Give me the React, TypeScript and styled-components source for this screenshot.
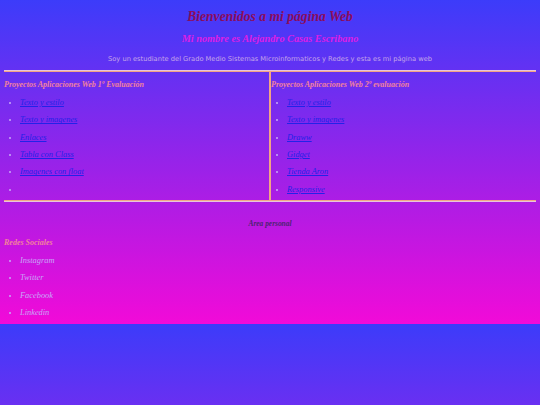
import React from "react";
import styled, { createGlobalStyle } from "styled-components";

const GlobalStyle = createGlobalStyle`
  html {
    margin: 0;
    background: linear-gradient(#3c3cfa, #f20ad8);
  }
  body {
    margin: 4px 4px 3px;
    font-family: "Liberation Serif", "Times New Roman", serif;
  }
`;

const Title = styled.h1`
  margin: 5px 0 0;
  font-size: 13.6px;
  line-height: 16px;
  font-style: italic;
  font-weight: bold;
  color: #8c0c5c;
  text-align: center;
`;

const SubTitle = styled.h2`
  margin: 7px 0 0;
  font-size: 10.3px;
  line-height: 13px;
  font-style: italic;
  font-weight: bold;
  color: #dc1ee6;
  text-align: center;
`;

const Intro = styled.p`
  margin: 10px 0 0;
  font-family: "DejaVu Sans", Verdana, sans-serif;
  font-size: 6.7px;
  line-height: 9px;
  color: #c4a6ea;
  text-align: center;
`;

const Table = styled.table`
  width: calc(100% + 4px);
  margin: 6px -2px 0;
  border: 1px solid #e8c4dc;
  border-collapse: separate;
  border-spacing: 0;
`;

const Cell = styled.td`
  width: 50%;
  vertical-align: top;
  padding: 0;
  border: 1px solid #f2a486;
`;

const SectionHeading = styled.h3<{ $top?: number }>`
  margin: ${(p) => p.$top ?? 8}px 0 0;
  font-size: 8px;
  line-height: 10px;
  font-style: italic;
  font-weight: bold;
  color: #f2829c;
`;

const List = styled.ul<{ $bottom?: number }>`
  margin: 4px 0 ${(p) => p.$bottom ?? 2}px;
  padding-left: 16px;
  list-style: disc;
`;

const Item = styled.li`
  font-size: 8.4px;
  line-height: 17.35px;
  font-style: italic;
  color: #c8a8f8;
`;

const Link = styled.a`
  color: #2222e8;
  text-decoration: underline;
`;

const AreaNote = styled.p`
  margin: 17px 0 0;
  font-size: 7.4px;
  line-height: 9px;
  font-style: italic;
  font-weight: bold;
  color: #4c2470;
  text-align: center;
`;

const first = ["Texto y estilo", "Texto y imagenes", "Enlaces", "Tabla con Class", "Imagenes con float"];
const second = ["Texto y estilo", "Texto y imagenes", "Draww", "Gidget", "Tienda Aron", "Responsive"];
const social = ["Instagram", "Twitter", "Facebook", "Linkedin"];

export default function App() {
  return (
    <>
      <GlobalStyle />
      <Title>Bienvenidos a mi página Web</Title>
      <SubTitle>Mi nombre es Alejandro Casas Escribano</SubTitle>
      <Intro>Soy un estudiante del Grado Medio Sistemas Microinformaticos y Redes y esta es mi página web</Intro>
      <Table>
        <tbody>
          <tr>
            <Cell>
              <SectionHeading>Proyectos Aplicaciones Web 1º Evaluación</SectionHeading>
              <List>
                {first.map((t) => (
                  <Item key={t}>
                    <Link href="#">{t}</Link>
                  </Item>
                ))}
                <Item>{"\u00a0"}</Item>
              </List>
            </Cell>
            <Cell>
              <SectionHeading>Proyectos Aplicaciones Web 2º evaluación</SectionHeading>
              <List>
                {second.map((t) => (
                  <Item key={t}>
                    <Link href="#">{t}</Link>
                  </Item>
                ))}
              </List>
            </Cell>
          </tr>
        </tbody>
      </Table>
      <AreaNote>Area personal</AreaNote>
      <SectionHeading $top={10}>Redes Sociales</SectionHeading>
      <List $bottom={0}>
        {social.map((t) => (
          <Item key={t}>{t}</Item>
        ))}
      </List>
    </>
  );
}
